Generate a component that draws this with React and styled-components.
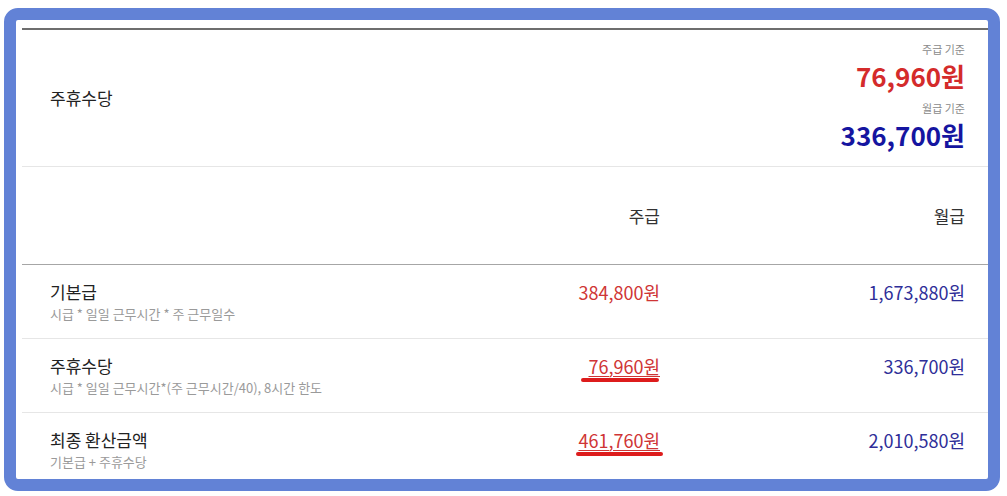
import React from "react";
import styled, { createGlobalStyle } from "styled-components";

const Global = createGlobalStyle`
  html, body { margin: 0; padding: 0; background: #ffffff; }
  body { font-family: "Noto Sans CJK KR", "Noto Sans", sans-serif; }
  * { box-sizing: border-box; }
`;

const Frame = styled.div`
  margin: 8px 0 0 4px;
  width: 996px;
  height: 483px;
  border: 12px solid #6282d6;
  border-radius: 14px;
  background: #ffffff;
  overflow: hidden;
  padding: 8px 0 0 6px;
`;

const Table = styled.div`
  border-top: 2px solid #6e6e6e;
  display: grid;
  grid-template-columns: 1fr 200px 328px;
`;

const Row = styled.div`
  display: contents;
`;

const Cell = styled.div`
  height: ${(p) => p.$h}px;
  border-bottom: 1px solid ${(p) => (p.$strong ? "#a6a6a6" : "#e6e6e6")};
  display: flex;
  flex-direction: column;
  justify-content: center;
  align-items: ${(p) => (p.$right ? "flex-end" : "flex-start")};
  padding-left: ${(p) => (p.$right ? 0 : 28)}px;
  padding-right: ${(p) => (p.$last ? 23 : 0)}px;
  grid-column: ${(p) => p.$span || "auto"};
  position: relative;
`;

const Summary = styled(Cell)`
  justify-content: flex-start;
  padding-top: 11px;
`;

const Label = styled.div`
  font-size: 17px;
  color: #222;
  line-height: 22px;
`;

const Sub = styled.div`
  font-size: 13px;
  color: #9a9a9a;
  line-height: 18px;
  margin-top: 2px;
`;

const Head = styled.div`
  font-size: 17px;
  color: #333;
`;

const Caption = styled.div`
  font-size: 11px;
  color: #8a8a8a;
  line-height: 16px;
  margin-top: ${(p) => p.$mt || 0}px;
`;

const Big = styled.div`
  font-size: 26px;
  font-weight: 700;
  line-height: 28px;
  color: ${(p) => p.$color};
  margin-top: ${(p) => p.$mt || 0}px;
`;

const Value = styled.div`
  font-size: 18px;
  line-height: 22px;
  color: ${(p) => p.$color};
  margin-top: -20px;
  position: relative;
  text-decoration: ${(p) => (p.$mark ? "underline" : "none")};
  text-decoration-thickness: 1px;
  text-underline-offset: 2px;
`;

const Marker = styled.span`
  position: absolute;
  left: ${(p) => p.$left}px;
  right: ${(p) => p.$right}px;
  bottom: -5px;
  height: 4px;
  border-radius: 2px;
  background: #dd1c1c;
`;

const RED = "#cf3535";
const BLUE = "#2e2e98";

const rows = [
  { label: "기본급", sub: "시급 * 일일 근무시간 * 주 근무일수", w: "384,800원", m: "1,673,880원" },
  { label: "주휴수당", sub: "시급 * 일일 근무시간*(주 근무시간/40), 8시간 한도", w: "76,960원", m: "336,700원", mark: [-7, 1] },
  { label: "최종 환산금액", sub: "기본급 + 주휴수당", w: "461,760원", m: "2,010,580원", mark: [-2, -3] },
];

export default function App() {
  return (
    <>
      <Global />
      <Frame>
        <Table>
          <Row>
            <Cell $h={137}>
              <Label>주휴수당</Label>
            </Cell>
            <Summary $h={137} $right $last $span="2 / 4">
              <Caption>주급 기준</Caption>
              <Big $color="#d42b2b" $mt={5}>76,960원</Big>
              <Caption $mt={10}>월급 기준</Caption>
              <Big $color="#1515a0" $mt={5}>336,700원</Big>
            </Summary>
          </Row>
          <Row>
            <Cell $h={98} $strong />
            <Cell $h={98} $strong $right>
              <Head>주급</Head>
            </Cell>
            <Cell $h={98} $strong $right $last>
              <Head>월급</Head>
            </Cell>
          </Row>
          {rows.map((r) => (
            <Row key={r.label}>
              <Cell $h={74}>
                <Label>{r.label}</Label>
                <Sub>{r.sub}</Sub>
              </Cell>
              <Cell $h={74} $right>
                <Value $color={RED} $mark={!!r.mark}>
                  {r.w}
                  {r.mark && <Marker $left={r.mark[0]} $right={r.mark[1]} />}
                </Value>
              </Cell>
              <Cell $h={74} $right $last>
                <Value $color={BLUE}>{r.m}</Value>
              </Cell>
            </Row>
          ))}
        </Table>
      </Frame>
    </>
  );
}
